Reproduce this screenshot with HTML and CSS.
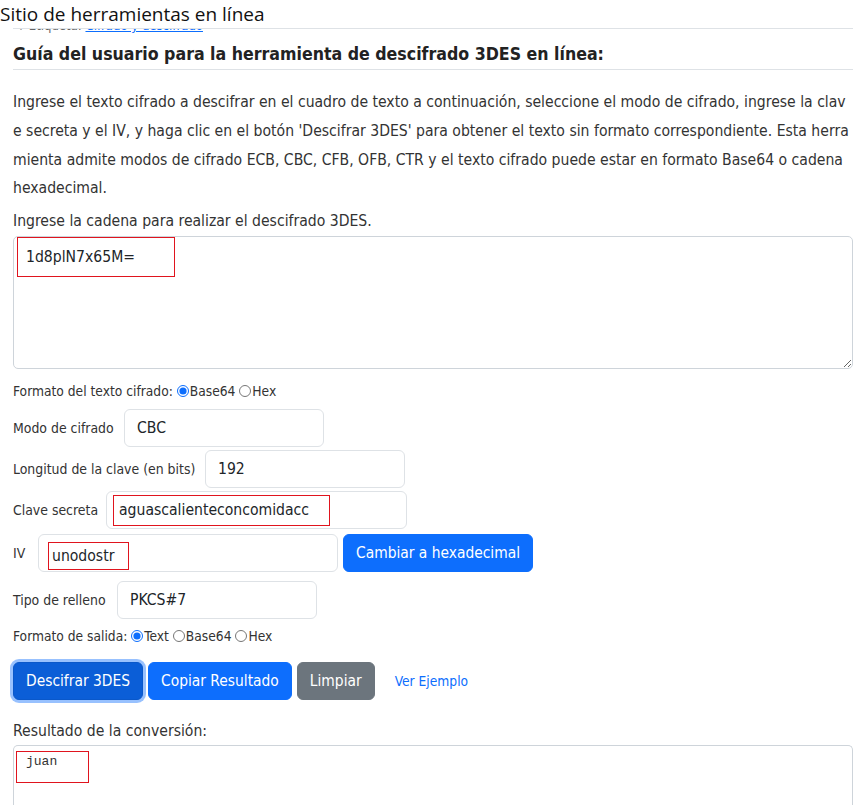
FILE: index.html
```html
<!DOCTYPE html>
<html lang="es">
<head>
<meta charset="utf-8">
<title>Descifrado 3DES en línea</title>
<link rel="stylesheet" href="styles.css">
</head>
<body>
<header class="site-header"><span class="site-title">Sitio de herramientas en línea</span></header>
<main class="page">
  <div class="tags"><span class="bullet">&#9830;</span> Etiqueta: <a href="#" class="tag-link">Cifrado y descifrado</a></div>
  <h2 class="guide-title">Guía del usuario para la herramienta de descifrado 3DES en línea:</h2>
  <p class="guide-text">Ingrese el texto cifrado a descifrar en el cuadro de texto a continuación, seleccione el modo de cifrado, ingrese la clave secreta y el IV, y haga clic en el botón 'Descifrar 3DES' para obtener el texto sin formato correspondiente. Esta herramienta admite modos de cifrado ECB, CBC, CFB, OFB, CTR y el texto cifrado puede estar en formato Base64 o cadena hexadecimal.</p>
  <div class="field-title">Ingrese la cadena para realizar el descifrado 3DES.</div>
  <div class="area-wrap">
    <textarea class="text-area input-area">1d8plN7x65M=</textarea>
    <span class="mark mark-input"></span>
  </div>
  <div class="radio-row">Formato del texto cifrado: <label class="radio"><input type="radio" name="inf" checked>Base64</label> <label class="radio"><input type="radio" name="inf">Hex</label></div>
  <div class="form-row row-mode"><span class="row-label">Modo de cifrado</span><div class="box">CBC</div></div>
  <div class="form-row row-len"><span class="row-label">Longitud de la clave (en bits)</span><div class="box">192</div></div>
  <div class="form-row row-key"><span class="row-label">Clave secreta</span><div class="box box-wide"><span class="boxed boxed-key">aguascalienteconcomidacc</span></div></div>
  <div class="form-row row-iv"><span class="row-label">IV</span><div class="box box-iv"><span class="boxed boxed-iv">unodostr</span></div><button class="btn btn-primary btn-hex">Cambiar a hexadecimal</button></div>
  <div class="form-row row-pad"><span class="row-label">Tipo de relleno</span><div class="box">PKCS#7</div></div>
  <div class="radio-row radio-out">Formato de salida: <label class="radio"><input type="radio" name="outf" checked>Text</label> <label class="radio"><input type="radio" name="outf">Base64</label> <label class="radio"><input type="radio" name="outf">Hex</label></div>
  <div class="actions">
    <button class="btn btn-primary btn-focus">Descifrar 3DES</button>
    <button class="btn btn-primary">Copiar Resultado</button>
    <button class="btn btn-secondary">Limpiar</button>
    <a href="#" class="example-link">Ver Ejemplo</a>
  </div>
  <div class="field-title result-title">Resultado de la conversión:</div>
  <div class="area-wrap out-wrap">
    <div class="text-area output-area"><span class="boxed boxed-out">juan</span></div>
  </div>
</main>
</body>
</html>
```

FILE: styles.css
```css
* { box-sizing: border-box; }
html, body { margin: 0; padding: 0; background: #fff; }
body {
  font-family: "DejaVu Sans Condensed", "DejaVu Sans", sans-serif;
  color: #333;
  overflow: hidden;
}
.site-header {
  position: fixed;
  top: 0; left: 0; right: 0;
  height: 28px;
  background: #fff;
  z-index: 5;
}
.site-header::after {
  content: "";
  position: absolute;
  left: 13px; right: 0; bottom: -1px;
  height: 1px;
  background: #dee2e6;
}
.site-title {
  font-family: "Open Sans", "Noto Sans", sans-serif;
  font-size: 19px;
  line-height: 28px;
  color: #111;
  display: block;
}
.page {
  padding: 18px 0 0 13px;
}
.tags {
  font-size: 13px;
  line-height: 16px;
  padding-left: 4px;
  color: #666;
}
.bullet { font-size: 10px; }
.tag-link { color: #0d6efd; }
.guide-title {
  margin: 7px 0 0;
  font-size: 17.6px;
  font-weight: bold;
  line-height: 24px;
  color: #222;
  padding-bottom: 3px;
  border-bottom: 1px solid #dee2e6;
}
.guide-text {
  margin: 18px 0 0;
  font-size: 15.6px;
  line-height: 28.75px;
  word-break: break-all;
  padding-right: 4px;
}
.field-title {
  font-size: 15.6px;
  line-height: 24px;
  margin-top: 6px;
}
.area-wrap {
  position: relative;
  margin-top: 3px;
}
.text-area {
  display: block;
  width: 100%;
  border: 1px solid #ced4da;
  border-radius: 5px;
  background: #fff;
  color: #212529;
}
.input-area {
  height: 133px;
  padding: 8px 12px;
  font-family: "DejaVu Sans Condensed", "DejaVu Sans", sans-serif;
  font-size: 15.6px;
  line-height: 24px;
  resize: vertical;
  outline: none;
}
.mark {
  position: absolute;
  border: 1px solid #e0141e;
}
.mark-input { left: 4px; top: 1px; width: 158px; height: 40px; }
.radio-row {
  font-size: 13.7px;
  line-height: 20px;
  margin-top: 12px;
}
.radio input {
  margin: 0 1px 0 0;
  width: 12px;
  height: 12px;
  vertical-align: -1px;
  accent-color: #0d6efd;
}
.form-row {
  display: flex;
  align-items: center;
  font-size: 13.9px;
  margin-top: 8px;
}
.row-len, .row-key { margin-top: 3px; }
.row-iv { margin-top: 5px; }
.row-pad { margin-top: 9px; }
.row-label { flex: none; white-space: nowrap; margin-right: 10px; }
.row-mode .row-label { width: 101px; }
.row-len .row-label { width: 182px; }
.row-key .row-label { width: 83px; }
.row-iv .row-label { width: 13px; margin-right: 12px; }
.row-pad .row-label { width: 94px; }
.box {
  flex: none;
  width: 200px;
  height: 38px;
  border: 1px solid #dee2e6;
  border-radius: 6px;
  padding: 0 12px;
  display: flex;
  align-items: center;
  font-size: 15.6px;
  color: #212529;
}
.box-wide { width: 301px; padding-left: 6px; }
.box-iv { width: 300px; padding-left: 9px; }
.boxed {
  flex: none;
  border: 1px solid #e0141e;
  display: inline-block;
}
.boxed-key { width: 217px; height: 31px; line-height: 29px; padding-left: 5px; }
.boxed-iv { width: 81px; height: 28px; line-height: 26px; padding-left: 3px; margin-top: 6px; }
.btn {
  font-family: "DejaVu Sans Condensed", "DejaVu Sans", sans-serif;
  font-size: 15.4px;
  line-height: 24px;
  border: 1px solid transparent;
  border-radius: 6px;
  padding: 6px 12px;
  color: #fff;
  cursor: pointer;
}
.btn-primary { background: #0d6efd; border-color: #0d6efd; }
.btn-secondary { background: #6c757d; border-color: #6c757d; }
.btn-hex { margin-left: 5px; height: 38px; }
.radio-out { margin-top: 7px; }
.actions {
  display: flex;
  align-items: center;
  gap: 5px;
  margin-top: 16px;
}
.btn-focus {
  background: #0b5ed7;
  border-color: #0a58ca;
  box-shadow: 0 0 0 3px rgba(49,132,253,.5);
}
.example-link {
  color: #0d6efd;
  text-decoration: none;
  font-size: 13.7px;
  margin-left: 15px;
}
.result-title { margin-top: 19px; }
.out-wrap { margin-top: 2px; }
.output-area {
  height: 120px;
  padding: 5px 2px;
  border-bottom: none;
}
.boxed-out {
  display: block;
  font-family: "Liberation Mono", monospace;
  font-size: 13px;
  width: 73px;
  height: 32px;
  padding: 2px 0 0 9px;
  color: #333;
}
```
